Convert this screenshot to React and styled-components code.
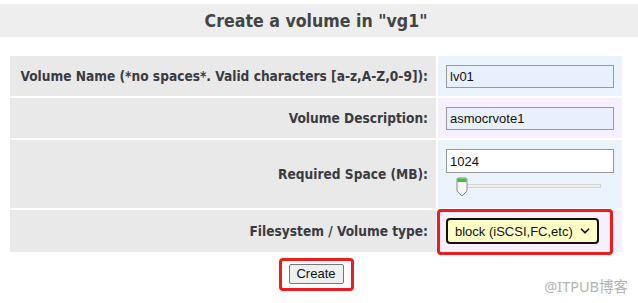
import React from "react";
import styled, { createGlobalStyle } from "styled-components";
import { ChevronDown } from "lucide-react";

const GlobalStyle = createGlobalStyle`
  html, body {
    margin: 0;
    padding: 0;
    background: #fff;
  }
  body {
    font-family: "DejaVu Sans", Verdana, sans-serif;
    color: #333;
  }
`;

const Page = styled.div`
  width: 638px;
  height: 303px;
  padding-top: 4px;
  box-sizing: border-box;
  position: relative;
  overflow: hidden;
`;

const TitleBar = styled.h1`
  margin: 0;
  height: 33px;
  padding-right: 6px;
  background: #eeeeee;
  display: flex;
  align-items: center;
  justify-content: center;
  font-family: "DejaVu Sans Condensed", "DejaVu Sans", sans-serif;
  font-stretch: condensed;
  font-size: 17.6px;
  font-weight: bold;
  color: #444;
`;

const Form = styled.div`
  margin: 19px 0 0 10px;
  width: 612px;
`;

const Grid = styled.div`
  display: grid;
  grid-template-columns: 426px 184px;
  grid-template-rows: 40px 40px 68px 42px;
  gap: 2px;
`;

const Label = styled.div`
  background: #e9e9e9;
  display: flex;
  align-items: center;
  justify-content: flex-end;
  padding: 0 8px;
  white-space: nowrap;
  font-family: "DejaVu Sans Condensed", "DejaVu Sans", sans-serif;
  font-stretch: condensed;
  font-size: 13.6px;
  font-weight: bold;
  color: #3a3a42;
`;

const Value = styled.div`
  background: ${(p) => (p.$tint === "lilac" ? "#f6effd" : "#ebf4fd")};
  padding: ${(p) => p.$top || 0}px 8px 0 8px;
  display: flex;
  flex-direction: column;
  justify-content: ${(p) => (p.$top ? "flex-start" : "center")};
`;

const TextInput = styled.input`
  box-sizing: border-box;
  width: 168px;
  height: ${(p) => (p.$plain ? 24 : 23)}px;
  border: 1px solid #999;
  border-radius: 0;
  background: ${(p) => (p.$plain ? "#fff" : "#e8f0fe")};
  padding: 0 3px;
  font-family: "Liberation Sans", Arial, sans-serif;
  font-size: 13px;
  color: #111;
  outline: none;
`;

const Slider = styled.div`
  position: relative;
  height: 22px;
  margin-top: 4px;
`;

const Track = styled.div`
  position: absolute;
  left: 15px;
  width: 138px;
  top: 7px;
  height: 2px;
  border: 1px solid #d4d4d4;
  background: #eee;
`;

const Thumb = styled.svg`
  position: absolute;
  left: 10px;
  top: 0;
`;

const SelectWrap = styled.div`
  position: relative;
  width: 153px;
  &::after {
    content: "";
    position: absolute;
    left: -9px;
    top: -9px;
    right: -14px;
    bottom: -11px;
    border: 3px solid #ee1d1d;
    border-radius: 4px;
    pointer-events: none;
  }
`;

const FakeSelect = styled.div`
  box-sizing: border-box;
  height: 26px;
  border: 2px solid #111;
  border-radius: 4px;
  background: #ffffc8;
  display: flex;
  align-items: center;
  justify-content: space-between;
  padding: 0 5px 0 7px;
  font-family: "Liberation Sans", Arial, sans-serif;
  font-size: 13px;
  color: #111;
`;

const Actions = styled.div`
  display: flex;
  justify-content: center;
  margin-top: 11px;
`;

const ButtonWrap = styled.div`
  position: relative;
  &::after {
    content: "";
    position: absolute;
    left: -10px;
    right: -10px;
    top: -5px;
    bottom: -7px;
    border: 3px solid #ee1d1d;
    border-radius: 4px;
    pointer-events: none;
  }
`;

const Button = styled.button`
  box-sizing: border-box;
  width: 55px;
  height: 20px;
  padding: 0;
  background: #efefef;
  border: 1px solid #767676;
  border-radius: 2px;
  font-family: "Liberation Sans", Arial, sans-serif;
  font-size: 13px;
  color: #111;
`;

const Watermark = styled.div`
  position: absolute;
  right: 10px;
  bottom: 7px;
  font-family: "Noto Sans", "Noto Sans CJK SC", sans-serif;
  font-size: 14.5px;
  color: #b4b4b4;
`;

export default function App() {
  return (
    <Page>
      <GlobalStyle />
      <TitleBar>Create a volume in "vg1"</TitleBar>
      <Form>
        <Grid>
          <Label>Volume Name (*no spaces*. Valid characters [a-z,A-Z,0-9]):</Label>
          <Value>
            <TextInput defaultValue="lv01" />
          </Value>
          <Label>Volume Description:</Label>
          <Value $tint="lilac">
            <TextInput defaultValue="asmocrvote1" />
          </Value>
          <Label>Required Space (MB):</Label>
          <Value $top={9}>
            <TextInput $plain defaultValue="1024" />
            <Slider>
              <Track />
              <Thumb width="12" height="20" viewBox="0 0 12 20">
                <path d="M1 2.5 Q1 1 2.5 1 H9.5 Q11 1 11 2.5 V14 L6 19 L1 14 Z" fill="#f7f7f7" stroke="#8a8a8a" />
                <path d="M1.5 2.5 Q1.5 1.5 2.5 1.5 H9.5 Q10.5 1.5 10.5 2.5 V5 H1.5 Z" fill="#3fbf3f" />
              </Thumb>
            </Slider>
          </Value>
          <Label>Filesystem / Volume type:</Label>
          <Value $tint="lilac">
            <SelectWrap>
              <FakeSelect>
                <span>block (iSCSI,FC,etc)</span>
                <ChevronDown size={14} strokeWidth={3} />
              </FakeSelect>
            </SelectWrap>
          </Value>
        </Grid>
        <Actions>
          <ButtonWrap>
            <Button>Create</Button>
          </ButtonWrap>
        </Actions>
      </Form>
      <Watermark>@ITPUB博客</Watermark>
    </Page>
  );
}
